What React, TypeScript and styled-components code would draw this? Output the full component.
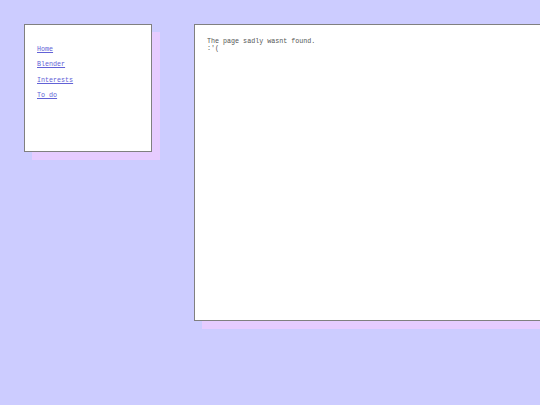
import React from 'react';
import styled, { createGlobalStyle } from 'styled-components';

const GlobalStyle = createGlobalStyle`
    html, body {
        margin: 0;
        background: #ccccff;
        overflow: hidden;
    }
    body {
        font-family: "Liberation Mono", "Courier New", monospace;
        font-size: 6.7px;
    }
`;

const Page = styled.div`
    display: flex;
    align-items: flex-start;
    gap: 42px;
    padding: 24px 0 24px 24px;
    width: 516px;
    overflow: hidden;
`;

const Card = styled.div<{ $w: number; $h: number }>`
    box-sizing: border-box;
    flex-shrink: 0;
    width: ${(p) => p.$w}px;
    height: ${(p) => p.$h}px;
    background: #ffffff;
    border: 1px solid #808080;
    box-shadow: 8px 8px 0 #e6ccff;
    padding: 13px 12px;
    line-height: 7px;
    color: #555;
`;

const Nav = styled.nav`
    display: flex;
    flex-direction: column;
    gap: 8.4px;
    padding-top: 8px;
`;

const NavLink = styled.a`
    color: #6262d6;
    text-decoration: underline;
    line-height: 7px;
`;

const Message = styled.p`
    margin: 0;
    white-space: pre-line;
`;

const links = ['Home', 'Blender', 'Interests', 'To do'];

const App = () => {
    return (
        <>
            <GlobalStyle />
            <Page>
                <Card $w={128} $h={128}>
                    <Nav>
                        {links.map((l) => (
                            <NavLink key={l} href="#">
                                {l}
                            </NavLink>
                        ))}
                    </Nav>
                </Card>
                <Card $w={400} $h={297}>
                    <Message>{'The page sadly wasnt found.\n:\'('}</Message>
                </Card>
            </Page>
        </>
    );
};

export default App;
